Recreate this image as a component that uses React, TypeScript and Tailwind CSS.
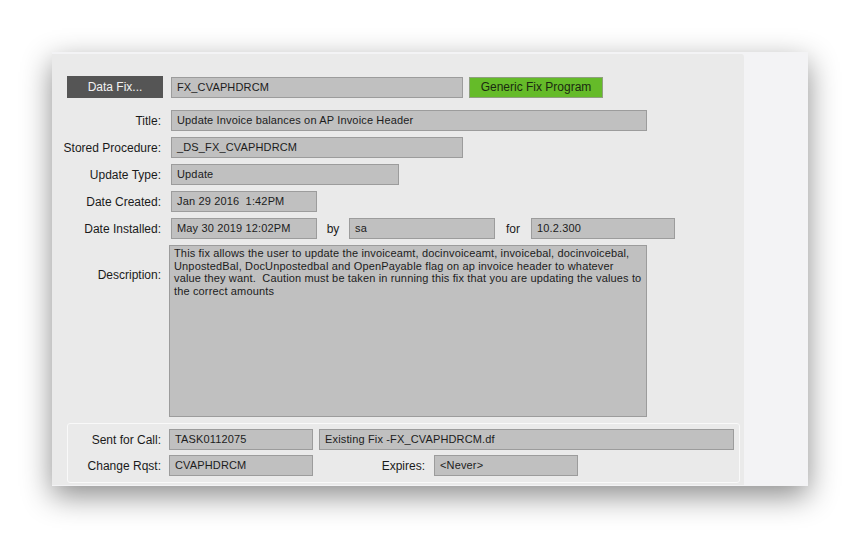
import React from "react";

const Field = ({ w, children, className = "" }: { w: string; children?: React.ReactNode; className?: string }) => (
  <div className={`${w} h-[21px] bg-[#c0c0c0] border border-[#9c9c9c] flex items-center pl-[5px] text-[11px] tracking-[0.15px] text-[#1c1c1c] whitespace-nowrap overflow-hidden ${className}`}>
    {children}
  </div>
);

const Label = ({ children }: { children: React.ReactNode }) => (
  <div className="w-[109px] text-right text-[12px] text-[#1a1a1a] shrink-0">{children}</div>
);

export default function App() {
  return (
    <div className="w-[860px] h-[538px] bg-white pt-[52px] pl-[52px]" style={{ fontFamily: '"Liberation Sans", Arial, sans-serif' }}>
      <div className="w-[756px] h-[434px] bg-[#f3f3f5] shadow-[0_10px_28px_rgba(0,0,0,0.45)] flex">
        <div className="w-[692px] mt-[2px] h-[431px] bg-[#eaeaea] rounded-tr-[3px] pt-[22px] flex flex-col">
          {/* Row 1 */}
          <div className="flex items-center h-[22px]">
            <div className="ml-[15px] w-[96px] h-[22px] bg-[#555555] text-[#f2f2f2] text-[12px] flex items-center justify-center">Data Fix...</div>
            <Field w="w-[292px]" className="ml-[8px]">FX_CVAPHDRCM</Field>
            <div className="ml-[6px] w-[134px] h-[21px] bg-[#65bb29] border border-[#8fa07f] text-[12px] text-[#1a2a10] flex items-center justify-center">Generic Fix Program</div>
          </div>
          <div className="flex flex-col gap-[6px] mt-[12px]">
            <div className="flex items-center">
              <Label>Title:</Label>
              <Field w="w-[476px]" className="ml-[10px]">Update Invoice balances on AP Invoice Header</Field>
            </div>
            <div className="flex items-center">
              <Label>Stored Procedure:</Label>
              <Field w="w-[292px]" className="ml-[10px]">_DS_FX_CVAPHDRCM</Field>
            </div>
            <div className="flex items-center">
              <Label>Update Type:</Label>
              <Field w="w-[228px]" className="ml-[10px]">Update</Field>
            </div>
            <div className="flex items-center">
              <Label>Date Created:</Label>
              <Field w="w-[146px]" className="ml-[10px]">Jan 29 2016&nbsp;&nbsp;1:42PM</Field>
            </div>
            <div className="flex items-center">
              <Label>Date Installed:</Label>
              <Field w="w-[146px]" className="ml-[10px]">May 30 2019 12:02PM</Field>
              <div className="w-[32px] text-center text-[12px] text-[#1a1a1a]">by</div>
              <Field w="w-[146px]">sa</Field>
              <div className="w-[36px] text-center text-[12px] text-[#1a1a1a]">for</div>
              <Field w="w-[144px]">10.2.300</Field>
            </div>
            <div className="flex">
              <div className="w-[109px] text-right text-[12px] text-[#1a1a1a] shrink-0 pt-[21px]">Description:</div>
              <div className="ml-[8px] w-[478px] h-[172px] bg-[#c0c0c0] border border-[#9c9c9c] pl-[4px] pt-[1px] text-[11px] tracking-[0.15px] leading-[12.5px] text-[#1c1c1c] whitespace-nowrap overflow-hidden">
                This fix allows the user to update the invoiceamt, docinvoiceamt, invoicebal, docinvoicebal,<br />
                UnpostedBal, DocUnpostedbal and OpenPayable flag on ap invoice header to whatever<br />
                value they want.&nbsp; Caution must be taken in running this fix that you are updating the values to<br />
                the correct amounts
              </div>
            </div>
          </div>
          {/* Group box */}
          <div className="mt-[6px] ml-[15px] w-[673px] h-[60px] border border-[#f9f9f9] rounded-[3px] pt-[5px] flex flex-col gap-[5px]">
            <div className="flex items-center">
              <div className="w-[93px] text-right text-[12px] text-[#1a1a1a] shrink-0">Sent for Call:</div>
              <Field w="w-[144px]" className="ml-[8px]">TASK0112075</Field>
              <Field w="w-[415px]" className="ml-[6px]">Existing Fix -FX_CVAPHDRCM.df</Field>
            </div>
            <div className="flex items-center">
              <div className="w-[93px] text-right text-[12px] text-[#1a1a1a] shrink-0">Change Rqst:</div>
              <Field w="w-[144px]" className="ml-[8px]">CVAPHDRCM</Field>
              <div className="w-[112px] text-right text-[12px] text-[#1a1a1a]">Expires:</div>
              <Field w="w-[144px]" className="ml-[9px]">&lt;Never&gt;</Field>
            </div>
          </div>
        </div>
      </div>
    </div>
  );
}
